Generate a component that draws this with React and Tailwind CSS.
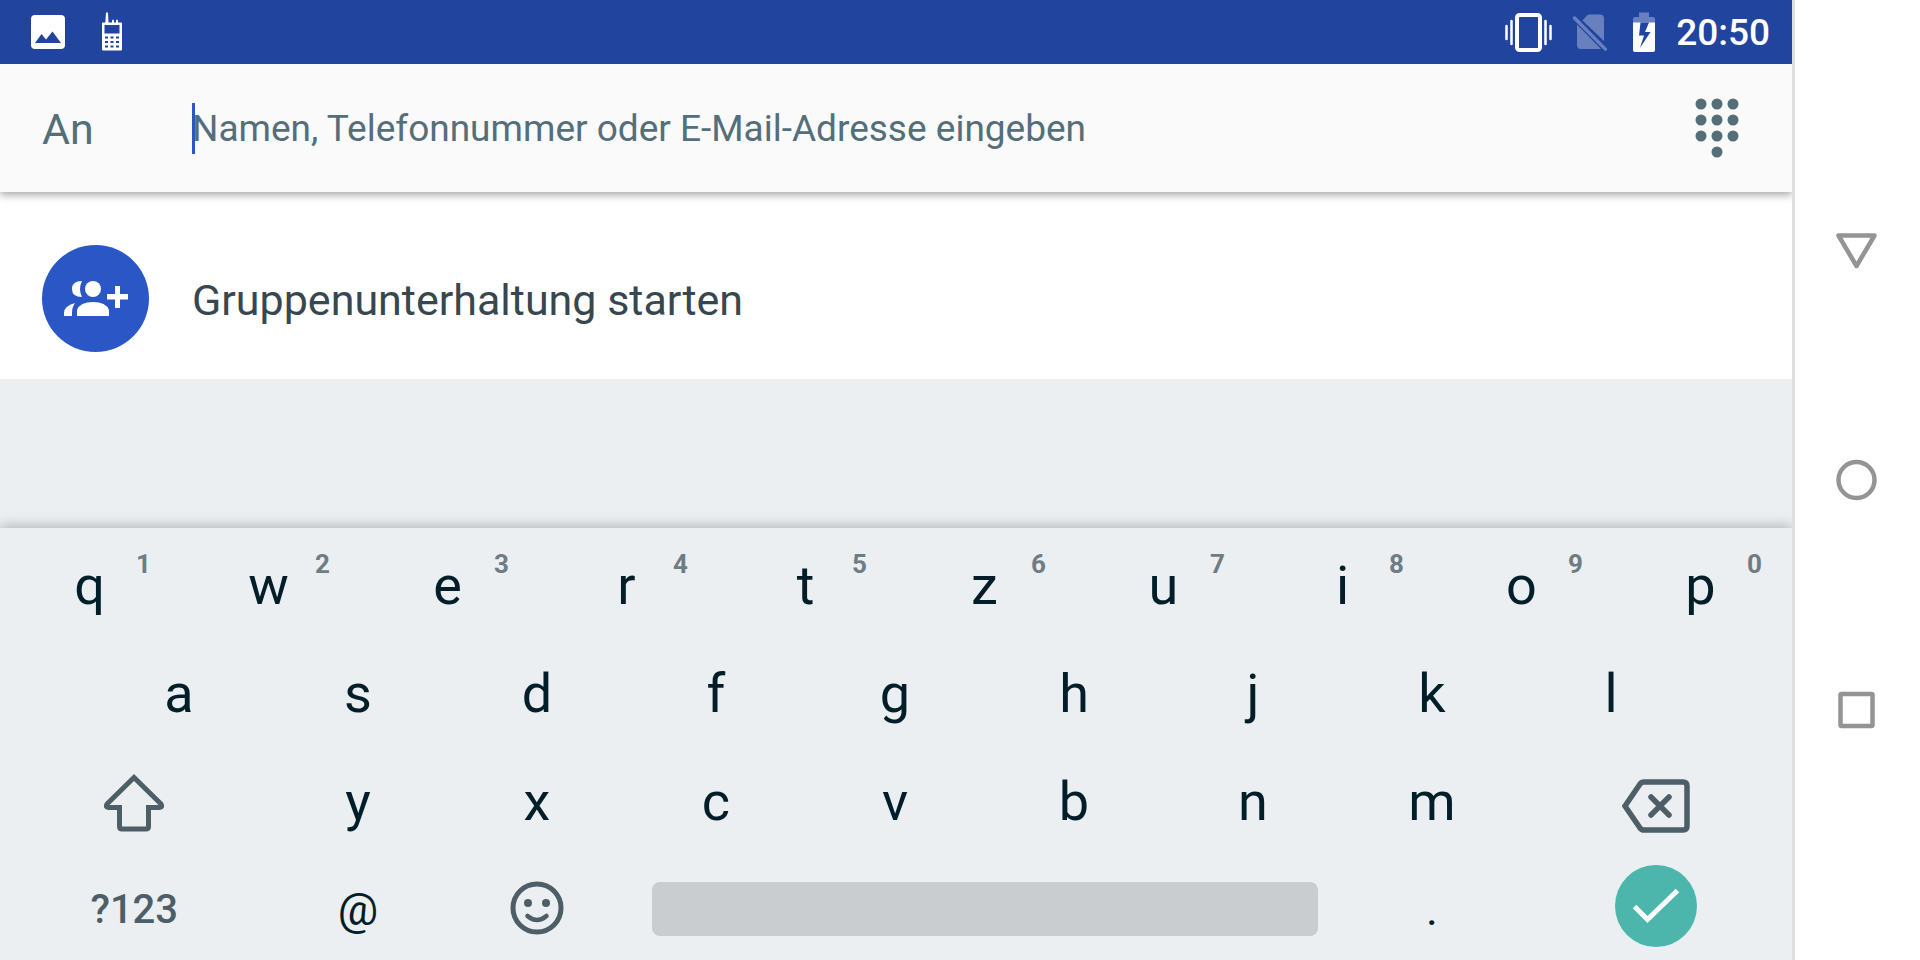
import React, { useState } from "react";

const TOP_ROW = ["q", "w", "e", "r", "t", "z", "u", "i", "o", "p"];
const HOME_ROW = ["a", "s", "d", "f", "g", "h", "j", "k", "l"];
const BOTTOM_ROW = ["y", "x", "c", "v", "b", "n", "m"];

const PictureIcon = () => (
    <svg className="h-9 w-9" viewBox="0 0 36 36" aria-hidden="true">
        <path
            fill="#fff"
            fillRule="evenodd"
            d="M5 1h26a4 4 0 0 1 4 4v26a4 4 0 0 1-4 4H5a4 4 0 0 1-4-4V5a4 4 0 0 1 4-4zM5 29h26l-8.500-11.500-6.500 8-4.500-5.500z"
        />
    </svg>
);

const PhoneIcon = () => (
    <svg className="h-10 w-6" viewBox="0 0 24 40" aria-hidden="true">
        <path
            fill="#fff"
            fillRule="evenodd"
            d="M6 1Q7 -0.500 8 1l.5 9.500h3.500V8.500q1-2 2 0v2h2V8.500q1-2 2 0v2h3q1 0 1 1V37.500q0 1-1 1H3q-1 0-1-1V11.500q0-1 1-1h2.300zM4.500 13v8.500h15V13zM5 24.500h3v2H5zM10.500 24.500h3v2h-3zM16 24.500h3v2h-3zM5 29h3v2H5zM10.500 29h3v2h-3zM16 29h3v2h-3zM5 33.500h3v2H5zM10.500 33.500h3v2h-3zM16 33.500h3v2h-3z"
        />
    </svg>
);

const VibrateIcon = () => (
    <svg className="h-10 w-12" viewBox="0 0 48 40" fill="none" stroke="#fff" aria-hidden="true">
        <rect x="13" y="3" width="23" height="35" rx="2.500" strokeWidth="4" />
        <path d="M2.500 14v13M46.500 14v13M7.500 9v23M41.500 9v23" strokeWidth="2.500" strokeLinecap="round" />
    </svg>
);

const NoSimIcon = () => (
    <svg className="h-10 w-9" viewBox="0 0 36 40" aria-hidden="true">
        <path
            fill="#fff"
            fillOpacity="0.320"
            d="M10.500 8.500 15 3.500q1-1 2.500-1H28q4 0 4 4v22.500zM5 11v22q0 4 4 4h20L5 12.500zM1 5q1.500-1.500 3 0l31 31.500q.5 2-2 2.500L1 7q-.5-1 0-2z"
        />
    </svg>
);

const BatteryIcon = () => (
    <svg className="h-10 w-6" viewBox="0 0 24 40" aria-hidden="true">
        <path fill="#fff" fillOpacity="0.320" d="M7 0.500h10v4.500h4q2 0 2 2v4H1V7q0-2 2-2h4z" />
        <path
            fill="#fff"
            fillRule="evenodd"
            d="M1 10.500h22V38q0 2-2 2H3q-2 0-2-2zM8.500 10.500L7 23.500h5L8 36l10.500-16H13l4-9.500z"
        />
    </svg>
);

const DialpadIcon = () => (
    <svg className="h-[60px] w-11" viewBox="0 0 44 60" fill="#546e7a" aria-hidden="true">
        {[6, 22, 38].map((y) => [6, 22, 38].map((x) => <circle key={x + "-" + y} cx={x} cy={y} r="5.500" />))}
        <circle cx="22" cy="54" r="5.500" />
    </svg>
);

const GroupAddIcon = () => (
    <svg className="h-9 w-16" viewBox="0 0 64 36" fill="#fff" aria-hidden="true">
        <circle cx="29" cy="8" r="8" />
        <path d="M18 0q-10 0-10 8t10 8q-4-8 0-16zM11 22Q0 25 0 32v3h8v-3q0-6 3-10zM13 35v-6q3-8 16-8t16 8v6zM51 5h5v8h8v5.500h-8V27h-5v-8.500h-8V13h8z" />
    </svg>
);

const ShiftIcon = () => (
    <svg className="h-[60px] w-16" viewBox="0 0 64 60" fill="none" stroke="#4d5e66" strokeWidth="5" aria-hidden="true">
        <path d="M32 5.500 5 32q-2 3.500 1.500 3.500H17.500V54.500q0 2.500 2.500 2.500h24q2.500 0 2.500-2.500V35.500h11q3.500 0 1.500-3.500z" />
    </svg>
);

const BackspaceIcon = () => (
    <svg className="h-[54px] w-[68px]" viewBox="0 0 68 54" fill="none" stroke="#4d5e66" strokeWidth="5.500" aria-hidden="true">
        <path d="M3 27 18 5q1.500-2 4-2h39q4 0 4 4v40q0 4-4 4H22q-2.500 0-4-2z" />
        <path d="m29 18 18 18M47 18 29 36" strokeLinecap="round" />
    </svg>
);

const SmileyIcon = () => (
    <svg className="h-[54px] w-[54px]" viewBox="0 0 54 54" fill="none" stroke="#4d5e66" aria-hidden="true">
        <circle cx="27" cy="27" r="24" strokeWidth="5" />
        <path d="M17.500 35q9.500 8 19 0" strokeWidth="4.500" strokeLinecap="round" />
        <circle cx="18" cy="22" r="4" fill="#4d5e66" stroke="none" />
        <circle cx="36" cy="22" r="4" fill="#4d5e66" stroke="none" />
    </svg>
);

const Key = ({ label, hint, className = "", onPress }) => (
    <button
        type="button"
        onClick={() => onPress(label)}
        className={`relative col-span-2 flex items-center justify-center pt-2 text-[54px] leading-[64px] text-[#021e29] ${className}`}
    >
        {label}
        {hint && (
            <span className="absolute top-5 right-7 text-[26px] leading-8 font-bold text-[#6f7c82]" aria-hidden="true">
                {hint}
            </span>
        )}
    </button>
);

const StatusBar = () => (
    <div className="relative z-20 flex h-16 items-center justify-between bg-[#21449e] pr-[22px] pl-[30px]">
        <div className="flex items-center gap-[34px]">
            <PictureIcon />
            <PhoneIcon />
        </div>
        <div className="flex items-center">
            <VibrateIcon />
            <div className="ml-5 flex"><NoSimIcon /></div>
            <div className="ml-6 flex"><BatteryIcon /></div>
            <time className="ml-5 pt-0.5 text-[37px] leading-[44px] font-medium text-white">20:50</time>
        </div>
    </div>
);

// Every row is split into 20 columns, a letter key takes two of them
const Keyboard = ({ onType, onDelete }) => (
    <section
        className="relative grid h-[432px] grid-rows-4 bg-[#ebeff2] pr-0.5 shadow-[0_-2px_12px_rgba(0,0,0,0.25)]"
        aria-label="Tastatur"
    >
        <div className="grid grid-cols-20">
            {TOP_ROW.map((letter, index) => (
                <Key key={letter} label={letter} hint={String((index + 1) % 10)} onPress={onType} />
            ))}
        </div>
        <div className="grid grid-cols-20">
            {HOME_ROW.map((letter, index) => (
                <Key key={letter} label={letter} className={index === 0 ? "col-start-2" : ""} onPress={onType} />
            ))}
        </div>
        <div className="grid grid-cols-20">
            <button type="button" aria-label="Umschalttaste" className="col-span-3 flex items-center justify-center pt-2">
                <ShiftIcon />
            </button>
            {BOTTOM_ROW.map((letter) => (
                <Key key={letter} label={letter} onPress={onType} />
            ))}
            <button
                type="button"
                aria-label="Löschen"
                onClick={onDelete}
                className="col-span-3 flex items-center justify-center pt-4"
            >
                <BackspaceIcon />
            </button>
        </div>
        <div className="grid grid-cols-20 text-[#4d5e66]">
            <button type="button" className="col-span-3 pt-2 text-[40px] leading-[48px] font-medium">?123</button>
            <button type="button" onClick={() => onType("@")} className="col-span-2 pt-2 text-[45px] leading-[48px] text-[#021e29]">@</button>
            <button type="button" aria-label="Emoji" className="col-span-2 flex items-center justify-center pt-1">
                <SmileyIcon />
            </button>
            <button type="button" aria-label="Leertaste" onClick={() => onType(" ")} className="col-span-8 flex items-center px-[25px] pt-1.5">
                <span className="h-[54px] w-full rounded-lg bg-[#c9cdd0]"></span>
            </button>
            <button type="button" onClick={() => onType(".")} className="col-span-2 pt-2 text-[45px] leading-[48px] text-[#021e29]">.</button>
            <button type="button" aria-label="Fertig" className="col-span-3 flex items-center justify-center">
                <span className="flex h-[82px] w-[82px] items-center justify-center rounded-full bg-[#4db6ac]">
                    <svg className="h-9 w-12" viewBox="0 0 48 36" fill="none" stroke="#fff" strokeWidth="5" aria-hidden="true">
                        <path d="m2.500 18.500 13 13L45.500 2.500" />
                    </svg>
                </span>
            </button>
        </div>
    </section>
);

const NavigationBar = () => (
    <nav
        className="flex w-32 shrink-0 flex-col items-center justify-center gap-[186px] bg-white shadow-[inset_3px_0_#e0e0e0]"
        aria-label="Navigation"
    >
        {[
            ["Zurück", <path key="back" d="M4.500 7.500h36L22.500 38z" />],
            ["Startseite", <circle key="home" cx="22.500" cy="22" r="18" />],
            ["Übersicht", <rect key="recents" x="6.500" y="6" width="32" height="32" rx="1" />],
        ].map(([label, shape]) => (
            <button key={label} type="button" aria-label={label}>
                <svg
                    className="block h-11 w-11"
                    viewBox="0 0 44 44"
                    fill="none"
                    stroke="#949494"
                    strokeWidth="4.500"
                    strokeLinejoin="round"
                    aria-hidden="true"
                >
                    {shape}
                </svg>
            </button>
        ))}
    </nav>
);

const App = () => {
    const [recipient, setRecipient] = useState("");

    return (
        <div className="flex min-h-screen bg-white font-[Roboto,sans-serif]">
            <main className="flex min-w-0 flex-1 flex-col overflow-hidden bg-[#ebeff2]">
                <StatusBar />
                <header className="relative z-10 flex h-32 items-center bg-[#fafafa] pr-[53px] pl-[42px] text-[#546e7a] shadow-[0_3px_8px_rgba(0,0,0,0.35)]">
                    <label htmlFor="recipient" className="w-[150px] pt-0.5 text-[43px] leading-[52px]">An</label>
                    <div className="flex flex-1 items-center">
                        {/* text cursor */}
                        <span className="-mr-[3px] h-[51px] w-[3px] bg-[#2a56c6]"></span>
                        <input
                            id="recipient"
                            type="text"
                            value={recipient}
                            onChange={(e) => setRecipient(e.target.value)}
                            placeholder="Namen, Telefonnummer oder E-Mail-Adresse eingeben"
                            className="h-[52px] flex-1 pt-0.5 text-[37px] outline-none placeholder:text-[#546e7a]"
                        />
                    </div>
                    <button type="button" aria-label="Wähltasten">
                        <DialpadIcon />
                    </button>
                </header>
                <button type="button" className="flex h-[187px] items-center gap-[43px] bg-white pt-[26px] pl-[42px]">
                    <span className="flex h-[107px] w-[107px] items-center justify-center rounded-full bg-[#2a56c6]">
                        <GroupAddIcon />
                    </span>
                    <span className="pt-0.5 text-[43px] leading-[52px] text-[#37474f]">Gruppenunterhaltung starten</span>
                </button>
                <div className="flex-1"></div>
                <Keyboard
                    onType={(letter) => setRecipient(recipient + letter)}
                    onDelete={() => setRecipient(recipient.slice(0, -1))}
                />
            </main>
            <NavigationBar />
        </div>
    );
};

export default App;
